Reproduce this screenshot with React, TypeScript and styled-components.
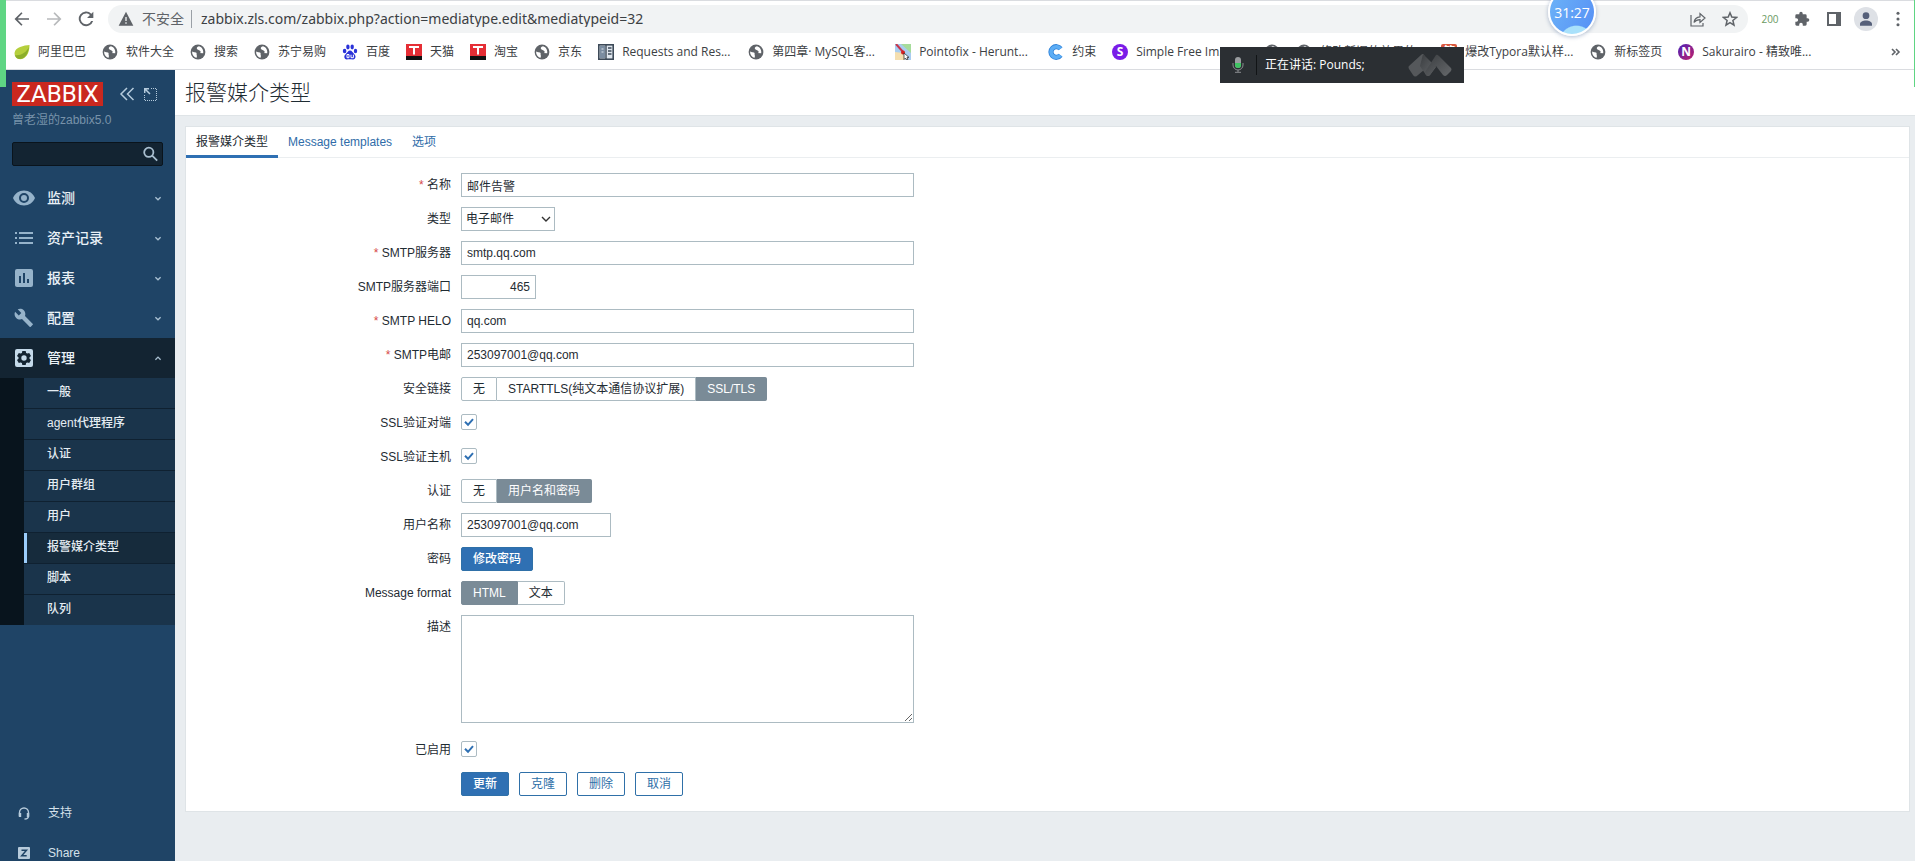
import React from "react";
import styled, { createGlobalStyle, css } from "styled-components";

const ui = `"Liberation Sans", "Noto Sans CJK SC", sans-serif`;
const chromeFont = `"Open Sans", "Noto Sans CJK SC", sans-serif`;

const GlobalStyle = createGlobalStyle`
  *, *::before, *::after { box-sizing: border-box; }
  html, body, #root { height: 100%; }
  body { margin: 0; overflow: hidden; font: 12px/16px ${ui}; color: #1f2c33; background: #e9edf0; }
  button, input, select, textarea { font: inherit; color: inherit; margin: 0; }
  a { color: inherit; text-decoration: none; }
  ul { list-style: none; margin: 0; padding: 0; }
`;

const Screen = styled.div`
  position: relative;
  height: 100vh;
  display: flex;
  flex-direction: column;
`;

/* ---------- browser frame ---------- */
const BrowserBar = styled.header`
  flex: none;
  background: #fff;
  border-top: 1px solid #dadce0;
  border-bottom: 1px solid #dadce0;
  font-family: ${chromeFont};
  color: #3c4043;
`;
const Toolbar = styled.div`
  display: flex;
  align-items: center;
  height: 36px;
  padding: 0 5px 0 10px;
  gap: 8px;
`;
const ToolButton = styled.button`
  display: flex;
  flex: none;
  align-items: center;
  justify-content: center;
  width: 24px;
  height: 24px;
  border: 0;
  padding: 0;
  background: none;
  color: #5f6368;
`;
const Address = styled.div`
  flex: 1;
  display: flex;
  align-items: center;
  height: 28px;
  margin: 0 2px;
  padding: 0 6px 0 10px;
  border-radius: 14px;
  background: #f1f3f4;
  color: #5f6368;
  font-size: 14px;
`;
const Insecure = styled.span`
  display: flex;
  align-items: center;
  gap: 8px;
  padding-right: 7px;
  border-right: 1px solid #9aa0a6;
  line-height: 18px;
`;
const Url = styled.input`
  flex: 1;
  min-width: 0;
  border: 0;
  padding: 0 0 0 9px;
  background: none;
  outline: 0;
  color: #3c4043;
  font-family: "Noto Sans", sans-serif;
  font-size: 14px;
`;
const AddressActions = styled.span`
  display: flex;
  gap: 8px;
`;
const Counter = styled.span`
  width: 24px;
  text-align: center;
  color: #6a9a62;
  font-size: 10px;
`;
const Avatar = styled.span`
  display: flex;
  width: 24px;
  height: 24px;
  border-radius: 50%;
  align-items: center;
  justify-content: center;
  background: #dee1e6;
`;
const Bookmarks = styled.nav`
  display: flex;
  align-items: center;
  height: 32px;
  padding: 0 14px 2px;
  gap: 16px;
  white-space: nowrap;
`;
const Bookmark = styled.a`
  display: flex;
  align-items: center;
  flex: none;
  gap: 8px;
`;
const BookmarkText = styled.span<{ $w?: number }>`
  ${(p) => p.$w && css`width: ${p.$w}px;`}
`;
const More = styled.button`
  display: flex;
  margin-left: auto;
  border: 0;
  padding: 0;
  background: none;
  color: #5f6368;
`;
const Tile = styled.span<{ $bg: string; $round?: boolean }>`
  display: flex;
  align-items: center;
  justify-content: center;
  width: 16px;
  height: 16px;
  border-radius: ${(p) => (p.$round ? "50%" : "2px")};
  background: ${(p) => p.$bg};
  color: #fff;
  font-weight: 700;
  font-size: 12px;
`;

/* ---------- floating windows ---------- */
const ShareEdge = styled.div<{ $side: "left" | "right" }>`
  position: absolute;
  top: 0;
  ${(p) => p.$side}: 0;
  width: ${(p) => (p.$side === "left" ? 6 : 1)}px;
  height: 87px;
  background: #5fd583;
`;
const Speaking = styled.div`
  position: absolute;
  top: 47px;
  right: 451px;
  width: 244px;
  height: 36px;
  display: flex;
  align-items: center;
  padding: 0 12px;
  background: #2b2f33;
  color: #fff;
  font-family: ${chromeFont};
`;
const SpeakingText = styled.span`
  flex: 1;
  margin-left: 12px;
  padding-left: 8px;
  border-left: 1px solid #111416;
  line-height: 20px;
`;
const Timer = styled.div`
  position: absolute;
  top: -12px;
  right: 319px;
  width: 48px;
  height: 48px;
  display: flex;
  align-items: center;
  justify-content: center;
  border: 2px solid #fff;
  border-radius: 50%;
  background: radial-gradient(circle at 60% 120%, #a9e1fb 0 28%, transparent 30%), linear-gradient(115deg, #6cb4f8, #568ff5);
  box-shadow: 0 1px 4px rgba(60, 90, 140, 0.4);
  color: #fff;
  font: 14px ${chromeFont};
`;

/* ---------- sidebar ---------- */
const Body = styled.div`
  flex: 1;
  min-height: 0;
  display: flex;
`;
const Sidebar = styled.aside`
  flex: none;
  width: 175px;
  display: flex;
  flex-direction: column;
  overflow: hidden;
  background: #1f4466;
`;
const Brand = styled.div`
  display: flex;
  align-items: center;
  padding: 12px 0 0 12px;
  height: 36px;
`;
const Logo = styled.a`
  display: flex;
  flex: none;
  align-items: center;
  justify-content: center;
  width: 91px;
  height: 24px;
  margin-right: 16px;
  background: #c9281f;
  color: #fff;
  font: 24px/24px Roboto, sans-serif;
`;
const SideTool = styled.button`
  display: flex;
  border: 0;
  padding: 0;
  margin-right: 9px;
  background: none;
  color: #b5cbdc;
`;
const ServerName = styled.div`
  padding: 6px 12px 0;
  height: 36px;
  color: #7893aa;
`;
const Search = styled.label`
  display: flex;
  align-items: center;
  height: 24px;
  margin: 0 12px 12px;
  padding: 0 4px;
  border: 1px solid #0a141c;
  border-radius: 2px;
  background: #132432;
  color: #a9bfd0;
`;
const SearchInput = styled.input`
  flex: 1;
  min-width: 0;
  border: 0;
  background: none;
  outline: 0;
`;
const MenuRow = styled.a<{ $open?: boolean }>`
  display: grid;
  grid-template-columns: 24px 1fr 10px;
  column-gap: 11px;
  align-items: center;
  height: 40px;
  padding: 0 12px;
  background: ${(p) => (p.$open ? "#132432" : "transparent")};
  color: ${(p) => (p.$open ? "#c5daea" : "#96b3ca")};
`;
const MenuText = styled.span`
  color: #e9f1f7;
  font-size: 14px;
  font-weight: 500;
`;
const Submenu = styled.ul`
  padding-left: 24px;
  background: #08141d;
`;
const SubItem = styled.li`
  & + & { border-top: 1px solid #0f2131; }
`;
const SubLink = styled.a<{ $on?: boolean }>`
  display: block;
  height: 30px;
  padding-left: 20px;
  border-left: 3px solid ${(p) => (p.$on ? "#9bcdfb" : "#1a344b")};
  background: ${(p) => (p.$on ? "#162b3c" : "#1a344b")};
  color: #e4ecf2;
  line-height: 29px;
  font-weight: 500;
`;
const SideFooter = styled.nav`
  flex: none;
  height: 68px;
  margin-top: auto;
  overflow: hidden;
`;
const FooterLink = styled.a`
  display: grid;
  grid-template-columns: 24px 1fr;
  column-gap: 12px;
  align-items: center;
  height: 40px;
  padding: 0 12px;
  color: #d5e1ea;
`;
const IconCell = styled.span`
  display: flex;
  justify-content: center;
`;

/* ---------- main ---------- */
const Main = styled.main`
  flex: 1;
  min-width: 0;
`;
const PageHead = styled.div`
  height: 46px;
  padding: 0 10px;
  border-bottom: 1px solid #dfe4e7;
  background: #fff;
`;
const Title = styled.h1`
  margin: 0;
  font-size: 21px;
  font-weight: 300;
  line-height: 46px;
`;
const Card = styled.section`
  margin: 10px 5px 0 10px;
  border: 1px solid #dfe4e7;
  background: #fff;
`;
const Tabs = styled.nav`
  display: flex;
  height: 31px;
  border-bottom: 1px solid #ebeef0;
`;
const Tab = styled.a<{ $on?: boolean }>`
  height: 31px;
  padding: 0 10px;
  line-height: 30px;
  color: ${(p) => (p.$on ? "#1f2c33" : "#2f6ca8")};
  ${(p) => p.$on && css`border-bottom: 3px solid #2f70b3;`}
`;
const Form = styled.form`
  display: grid;
  gap: 10px;
  padding: 15px 0;
`;
const Row = styled.div<{ $tall?: boolean }>`
  display: grid;
  grid-template-columns: 265px 1fr;
  column-gap: 10px;
  align-items: ${(p) => (p.$tall ? "start" : "center")};
  min-height: 24px;
  padding-bottom: ${(p) => (p.$tall ? 5 : 0)}px;
`;
const Label = styled.label<{ $req?: boolean }>`
  text-align: right;
  line-height: 24px;
  ${(p) => p.$req && css`&::before { content: "* "; color: #d64a4a; }`}
`;
const TextBox = styled.input<{ $w?: number; $right?: boolean }>`
  width: ${(p) => p.$w ?? 453}px;
  height: 24px;
  padding: 0 5px;
  border: 1px solid #acbbc2;
  background: #fff;
  outline: 0;
  text-align: ${(p) => (p.$right ? "right" : "left")};
`;
const SelectWrap = styled.span`
  position: relative;
  width: 94px;
  display: flex;
  & > svg { position: absolute; right: 4px; top: 8px; pointer-events: none; }
`;
const Select = styled.select`
  appearance: none;
  width: 100%;
  height: 24px;
  padding: 0 4px;
  border: 1px solid #acbbc2;
  border-radius: 0;
  background: #fff;
`;
const Area = styled.textarea`
  display: block;
  width: 453px;
  height: 108px;
  border: 1px solid #acbbc2;
  resize: both;
  background: #fff;
`;
const Check = styled.input`
  appearance: none;
  display: block;
  width: 16px;
  height: 16px;
  margin-bottom: 2px;
  border: 1px solid #acbbc2;
  border-radius: 2px;
  background: #fff url("data:image/svg+xml,%3Csvg xmlns='http://www.w3.org/2000/svg' viewBox='0 0 14 14'%3E%3Cpath d='M3 6.8l3 3 5-5.6' fill='none' stroke='%232f70b3' stroke-width='2'/%3E%3C/svg%3E") center / 14px 14px;
`;
const Segments = styled.div`
  display: flex;
`;
const Segment = styled.label`
  height: 24px;
  padding: 0 11px;
  border: 1px solid #acbbc2;
  line-height: 22px;
  & + & { border-left: 0; }
  &:first-child { border-radius: 2px 0 0 2px; }
  &:last-child { border-radius: 0 2px 2px 0; }
  &:has(input:checked) { background: #7a8b97; border-color: #7a8b97; color: #fff; }
`;
const HiddenRadio = styled.input`
  position: absolute;
  opacity: 0;
  pointer-events: none;
`;
const Actions = styled.div`
  display: flex;
  gap: 10px;
  grid-column: 2;
`;
const Button = styled.button<{ $primary?: boolean }>`
  justify-self: start;
  height: 24px;
  padding: 0 11px;
  border: 1px solid #2f70a8;
  border-radius: 2px;
  line-height: 22px;
  background: ${(p) => (p.$primary ? "#2f70b3" : "#fff")};
  color: ${(p) => (p.$primary ? "#fff" : "#2f70a8")};
  font-weight: ${(p) => (p.$primary ? 500 : 400)};
`;

/* ---------- drawings ---------- */
const Globe = () => (
  <svg width="16" height="16" viewBox="0 0 16 16">
    <circle cx="8" cy="8" r="7.4" fill="#5f6368" />
    <path d="M9 2.2C7 2.6 6.200 4 7.200 5.200c1 1.100 2.800.8 3.400 2.200.3.9-.2 1.400-1.200 1.600l3.800.2c.5-3-1-6.200-4.200-7zM2.200 7.500c1 .2 1.400.8 2.600.8 1.600 0 2 .7 1.800 1.700-.2.800.4 1.200.3 2.200l-.3 1.600C3.800 13 1.800 10.500 2.200 7.500z" fill="#fff" />
  </svg>
);
const Leaf = () => (
  <svg width="16" height="16" viewBox="0 0 16 16">
    <path d="M15.500 1C10 1.500 1 3 .5 9c0 3 1.500 5.500 4 6 6 1 11-4 11-14z" fill="#b5cf3c" />
    <path d="M1 11c5 1 11-2 14-8-1 8-5 12.500-10 12-2-.3-3.500-2-4-4z" fill="#8cae2b" />
  </svg>
);
const Paw = () => (
  <svg width="16" height="16" viewBox="0 0 16 16" fill="#2a32d8">
    <ellipse cx="2.600" cy="7" rx="1.800" ry="2.300" /><ellipse cx="5.900" cy="3" rx="1.700" ry="2.400" />
    <ellipse cx="10.200" cy="3" rx="1.700" ry="2.400" /><ellipse cx="13.500" cy="7" rx="1.700" ry="2.200" />
    <path d="M8 6.500c2 0 2.600 2 4.200 3.500 2.600 2.500 1 5.500-1.200 5.400-2 0-4-.4-6 0-2.400.2-4-3-1.200-5.400C5.600 8.500 6 6.500 8 6.500z" />
    <path d="M5 10.500h2v3.200H5zM9 10.700v3h2.400v-3" fill="none" stroke="#fff" />
  </svg>
);
const RedT = () => (
  <svg width="16" height="16" viewBox="0 0 16 16">
    <path fill="#e52e35" d="M0 0h16v12H0z" /><path fill="#111" d="M0 12h16v4H0z" />
    <path d="M3 3h10M8 2.500v8" stroke="#fff" strokeWidth="2" />
  </svg>
);
const Book = () => (
  <svg width="16" height="16" viewBox="0 0 16 16">
    <rect x=".8" y=".8" width="14.400" height="14.400" fill="#dfe6ee" stroke="#3d4a58" strokeWidth="1.600" />
    <path d="M2 2h5v12H2z" fill="#7b8da1" /><path d="M8 1v14M10 4h3.500M10 7h3.500M10 10h3.500" stroke="#3d4a58" strokeWidth="1.400" />
    <path d="M3.500 5h2M3.500 8h2" stroke="#dfe6ee" />
  </svg>
);
const Pointo = () => (
  <svg width="16" height="16" viewBox="0 0 16 16">
    <path fill="#a9cdf0" d="M0 0h16v16H0z" /><path fill="#a6dc9b" d="M6 0h10v9z" /><path fill="#f5dfb0" d="M0 8l8 1 2 7H0z" />
    <path d="M1 0l8 9" stroke="#c7354a" strokeWidth="2" /><circle cx="8" cy="8.500" r="2" fill="#d42222" />
    <path d="M9 9v6.500l1.500-1.500 1.200 2 1.300-.6-1-2h2z" fill="#fff" stroke="#222" strokeWidth=".7" />
  </svg>
);
const BlueC = () => (
  <svg width="16" height="16" viewBox="0 0 16 16">
    <path d="M12.500 4.800A5.300 5.300 0 1 0 12.500 11.200" fill="none" stroke="#2a7fd8" strokeWidth="5.200" />
    <path d="M12.500 4.800A5.300 5.300 0 1 0 12.500 11.200" fill="none" stroke="#5cadf5" strokeWidth="3.600" />
  </svg>
);

const Svg = ({ s = 16, children, vb = "0 0 24 24" }: { s?: number; children: React.ReactNode; vb?: string }) => (
  <svg width={s} height={s} viewBox={vb} fill="currentColor">{children}</svg>
);
const Chevron = ({ up }: { up?: boolean }) => (
  <svg width="10" height="10" viewBox="0 0 10 10" fill="none" stroke="#a9c0d2" strokeWidth="1.300">
    <path d={up ? "M2.400 6.700l2.600-2.600 2.600 2.600" : "M2.400 4.200l2.600 2.600 2.600-2.600"} />
  </svg>
);

const menuIcons: Record<string, React.ReactNode> = {
  eye: <Svg s={24}><path d="M12 4.500C7 4.500 2.700 7.600 1 12c1.700 4.400 6 7.500 11 7.500s9.300-3.100 11-7.500c-1.700-4.400-6-7.500-11-7.500zM12 17a5 5 0 1 1 0-10 5 5 0 0 1 0 10zm0-8a3 3 0 1 0 0 6 3 3 0 0 0 0-6z" /></Svg>,
  list: <Svg s={24}><path d="M3 6h2v2H3zM3 11h2v2H3zM3 16h2v2H3zM7 6h14v2H7zM7 11h14v2H7zM7 16h14v2H7z" /></Svg>,
  chart: <Svg s={24}><path d="M19 3H5a2 2 0 0 0-2 2v14c0 1.100.9 2 2 2h14a2 2 0 0 0 2-2V5a2 2 0 0 0-2-2zM9 17H7v-7h2zm4 0h-2V7h2zm4 0h-2v-4h2z" /></Svg>,
  wrench: <Svg s={24}><path d="M20.600 17.700l-7.600-7.600c.8-1.900.3-4.200-1.200-5.800C10.100 2.700 7.700 2.400 5.700 3.300L9.300 6.900 6.800 9.400 3.100 5.800C2.100 7.700 2.500 10.200 4.200 11.900c1.600 1.600 3.900 2 5.800 1.200l7.600 7.600c.3.300.9.300 1.200 0l1.900-1.900c.4-.3.400-.8-.1-1.100z" /></Svg>,
  gear: <Svg s={24}><path fillRule="evenodd" d="M5 3h14a2 2 0 0 1 2 2v14a2 2 0 0 1-2 2H5a2 2 0 0 1-2-2V5a2 2 0 0 1 2-2zm5.300 2l-.4 1.900-1.300.7L6.800 7 5 10l1.500 1.300v1.400L5 14l1.800 3 1.800-.6 1.300.7.400 1.900h3.400l.4-1.900 1.300-.7 1.800.6 1.800-3-1.500-1.300v-1.400L19 10l-1.800-3-1.800.6-1.300-.7-.4-1.900zM12 9.300a2.700 2.700 0 1 1 0 5.400 2.700 2.700 0 0 1 0-5.400z" /></Svg>,
};

type Mark = { icon: React.ReactNode; text?: string; w?: number };
const marks: Mark[] = [
  { icon: <Leaf />, text: "阿里巴巴" },
  { icon: <Globe />, text: "软件大全" },
  { icon: <Globe />, text: "搜索" },
  { icon: <Globe />, text: "苏宁易购" },
  { icon: <Paw />, text: "百度" },
  { icon: <RedT />, text: "天猫" },
  { icon: <RedT />, text: "淘宝" },
  { icon: <Globe />, text: "京东" },
  { icon: <Book />, text: "Requests and Res...", w: 110 },
  { icon: <Globe />, text: "第四章· MySQL客...", w: 107 },
  { icon: <Pointo />, text: "Pointofix - Herunt...", w: 113 },
  { icon: <BlueC />, text: "约束" },
  { icon: <Tile $round $bg="#7a1ce8">S</Tile>, text: "Simple Free Im...", w: 112 },
  { icon: <Globe /> },
  { icon: <Globe />, text: "修改新旧的效果的...", w: 105 },
  { icon: <Tile $bg="#d9583f">简</Tile>, text: "爆改Typora默认样...", w: 109 },
  { icon: <Globe />, text: "新标签页" },
  { icon: <Tile $round $bg="linear-gradient(135deg,#4a22b8,#c0206a)">N</Tile>, text: "Sakurairo - 精致唯..." },
];

const menu = [
  ["eye", "监测"],
  ["list", "资产记录"],
  ["chart", "报表"],
  ["wrench", "配置"],
  ["gear", "管理"],
];
const submenu = ["一般", "agent代理程序", "认证", "用户群组", "用户", "报警媒介类型", "脚本", "队列"];

const Choice = ({ name, options, value }: { name: string; options: string[]; value: string }) => (
  <Segments role="radiogroup" aria-label={name}>
    {options.map((o) => (
      <Segment key={o}>
        <HiddenRadio type="radio" name={name} defaultChecked={o === value} />
        {o}
      </Segment>
    ))}
  </Segments>
);

type FieldProps = { id: string; label: string; value: string; req?: boolean; w?: number; right?: boolean };
const Field = ({ id, label, value, req, w, right }: FieldProps) => (
  <Row>
    <Label htmlFor={id} $req={req}>{label}</Label>
    <TextBox id={id} type="text" defaultValue={value} $w={w} $right={right} />
  </Row>
);

export default function App() {
  return (
    <Screen>
      <GlobalStyle />
      <BrowserBar>
        <Toolbar>
          <ToolButton aria-label="Back"><Svg><path d="M22.500 10.700H5.600l7.200-7.200L11 1.700.8 12 11 22.300l1.800-1.800-7.200-7.200h16.900z" /></Svg></ToolButton>
          <ToolButton aria-label="Forward" disabled><Svg><path opacity=".45" d="M1.500 10.700h16.900l-7.200-7.200L13 1.700 23.200 12 13 22.300l-1.800-1.800 7.200-7.200H1.500z" /></Svg></ToolButton>
          <ToolButton aria-label="Reload"><Svg><path d="M20 4a11 11 0 1 0 2.700 11h-3A8.200 8.200 0 1 1 18 6l-4.500 4.500H23V1z" /></Svg></ToolButton>
          <Address>
            <Insecure>
              <Svg><path d="M12 1L1 22h22zM11 9h2v6h-2zm0 8h2v2h-2z" fillRule="evenodd" /></Svg>
              不安全
            </Insecure>
            <Url aria-label="Address" defaultValue="zabbix.zls.com/zabbix.php?action=mediatype.edit&mediatypeid=32" />
            <AddressActions>
              <ToolButton aria-label="Share">
                <svg width="16" height="16" viewBox="0 0 16 16" fill="none" stroke="currentColor" strokeWidth="1.200"><path d="M1 4v11h12v-3M4 11.500C4.500 8 6.500 6 10 5.800V2.500L15 7l-5 4.500V8.600c-2.500 0-4.500.9-6 2.900z" /></svg>
              </ToolButton>
              <ToolButton aria-label="Bookmark">
                <svg width="16" height="16" viewBox="0 0 16 16" fill="none" stroke="currentColor" strokeWidth="1.500"><path d="M8 1.800l1.800 4.300 4.700.4-3.600 3 1.100 4.600L8 11.700l-4 2.400 1.100-4.600-3.600-3 4.700-.4z" /></svg>
              </ToolButton>
            </AddressActions>
          </Address>
          <Counter>200</Counter>
          <ToolButton aria-label="Extensions"><Svg><path d="M20.500 11H19V7a2 2 0 0 0-2-2h-4V3.500a2.500 2.500 0 0 0-5 0V5H4a2 2 0 0 0-2 2v3.800h1.500a2.700 2.700 0 0 1 0 5.400H2V20c0 1.100.9 2 2 2h3.800v-1.500a2.700 2.700 0 0 1 5.400 0V22H17a2 2 0 0 0 2-2v-4h1.500a2.500 2.500 0 0 0 0-5z" /></Svg></ToolButton>
          <ToolButton aria-label="Side panel"><Svg s={14} vb="0 0 14 14"><path fillRule="evenodd" d="M0 0h14v14H0zM2 2v10h7V2z" /></Svg></ToolButton>
          <Avatar><Svg s={18}><path fill="#56607a" d="M12 12a4.500 4.500 0 1 0 0-9 4.500 4.500 0 0 0 0 9zm0 2c-4 0-8 2-8 4.500V21h16v-2.500c0-2.500-4-4.500-8-4.500z" /></Svg></Avatar>
          <ToolButton aria-label="Menu"><Svg><circle cx="12" cy="3.500" r="2.300" /><circle cx="12" cy="12" r="2.300" /><circle cx="12" cy="20.500" r="2.300" /></Svg></ToolButton>
        </Toolbar>
        <Bookmarks>
          {marks.map((m, i) => (
            <Bookmark key={i} href="#">
              {m.icon}
              {m.text && <BookmarkText $w={m.w}>{m.text}</BookmarkText>}
            </Bookmark>
          ))}
          <More aria-label="More bookmarks">
            <svg width="10" height="8" viewBox="0 0 10 8" fill="none" stroke="currentColor" strokeWidth="1.600"><path d="M1 1l3 3-3 3M5 1l3 3-3 3" /></svg>
          </More>
        </Bookmarks>
      </BrowserBar>

      <Body>
        <Sidebar>
          <Brand>
            <Logo href="#">ZABBIX</Logo>
            <SideTool aria-label="Collapse">
              <svg width="16" height="14" viewBox="0 0 16 14" fill="none" stroke="currentColor" strokeWidth="1.500"><path d="M8 1L2 7l6 6M14.500 1l-6 6 6 6" /></svg>
            </SideTool>
            <SideTool aria-label="Hide">
              <svg width="13" height="13" viewBox="0 0 13 13" fill="none" stroke="currentColor"><path d="M7 .5h5.500v12H.5V7" strokeDasharray="1 1" /><path d="M.7 5V.7H5M1 1l5 5" strokeWidth="1.500" /></svg>
            </SideTool>
          </Brand>
          <ServerName>曾老湿的zabbix5.0</ServerName>
          <Search>
            <SearchInput type="search" aria-label="Search" />
            <svg width="16" height="16" viewBox="0 0 16 16" fill="none" stroke="currentColor" strokeWidth="1.800"><circle cx="6.800" cy="6.300" r="4.600" /><path d="M10.200 9.700l5 5" /></svg>
          </Search>
          <nav>
            {menu.map(([icon, text]) => (
              <MenuRow key={text} href="#" $open={icon === "gear"}>
                <IconCell>{menuIcons[icon]}</IconCell>
                <MenuText>{text}</MenuText>
                <Chevron up={icon === "gear"} />
              </MenuRow>
            ))}
            <Submenu>
              {submenu.map((s) => (
                <SubItem key={s}><SubLink href="#" $on={s === "报警媒介类型"}>{s}</SubLink></SubItem>
              ))}
            </Submenu>
          </nav>
          <SideFooter>
            <FooterLink href="#">
              <IconCell><svg width="12" height="13" viewBox="0 0 12 13" fill="none" stroke="#b7cbdb" strokeWidth="1.400"><path d="M1.500 9V5.500a4.500 4.500 0 0 1 9 0V9M10.500 9c0 2-1.500 3-4 3" /><path d="M2 6v4M10 6v4" strokeWidth="2.400" /></svg></IconCell>
              支持
            </FooterLink>
            <FooterLink href="#">
              <IconCell><svg width="12" height="12" viewBox="0 0 12 12"><rect width="12" height="12" rx="1" fill="#b7cbdb" /><path d="M3.500 3.200h5L3.700 8.800h5" fill="none" stroke="#1f4466" strokeWidth="1.500" /></svg></IconCell>
              Share
            </FooterLink>
          </SideFooter>
        </Sidebar>

        <Main>
          <PageHead><Title>报警媒介类型</Title></PageHead>
          <Card>
            <Tabs>
              <Tab href="#" $on>报警媒介类型</Tab>
              <Tab href="#">Message templates</Tab>
              <Tab href="#">选项</Tab>
            </Tabs>
            <Form>
              <Field id="name" label="名称" value="邮件告警" req />
              <Row>
                <Label htmlFor="type">类型</Label>
                <SelectWrap>
                  <Select id="type"><option>电子邮件</option></Select>
                  <svg width="10" height="8" viewBox="0 0 10 8" fill="none" stroke="#333" strokeWidth="1.400"><path d="M1 2l4 4 4-4" /></svg>
                </SelectWrap>
              </Row>
              <Field id="server" label="SMTP服务器" value="smtp.qq.com" req />
              <Field id="port" label="SMTP服务器端口" value="465" w={75} right />
              <Field id="helo" label="SMTP HELO" value="qq.com" req />
              <Field id="email" label="SMTP电邮" value="253097001@qq.com" req />
              <Row><Label as="span">安全链接</Label><Choice name="安全链接" options={["无", "STARTTLS(纯文本通信协议扩展)", "SSL/TLS"]} value="SSL/TLS" /></Row>
              <Row><Label htmlFor="peer">SSL验证对端</Label><Check id="peer" type="checkbox" defaultChecked /></Row>
              <Row><Label htmlFor="host">SSL验证主机</Label><Check id="host" type="checkbox" defaultChecked /></Row>
              <Row><Label as="span">认证</Label><Choice name="认证" options={["无", "用户名和密码"]} value="用户名和密码" /></Row>
              <Field id="user" label="用户名称" value="253097001@qq.com" w={150} />
              <Row><Label htmlFor="pass">密码</Label><Button id="pass" type="button" $primary>修改密码</Button></Row>
              <Row><Label as="span">Message format</Label><Choice name="Message format" options={["HTML", "文本"]} value="HTML" /></Row>
              <Row $tall><Label htmlFor="desc">描述</Label><Area id="desc" /></Row>
              <Row><Label htmlFor="on">已启用</Label><Check id="on" type="checkbox" defaultChecked /></Row>
              <Row>
                <Actions>
                  <Button type="button" $primary>更新</Button>
                  <Button type="button">克隆</Button>
                  <Button type="button">删除</Button>
                  <Button type="button">取消</Button>
                </Actions>
              </Row>
            </Form>
          </Card>
        </Main>
      </Body>

      <ShareEdge $side="left" />
      <ShareEdge $side="right" />
      <Speaking>
        <svg width="12" height="16" viewBox="0 0 12 16"><rect x="3" y="0" width="6" height="11" rx="3" fill="#9a9da0" /><path d="M3 6h6v2a3 3 0 0 1-6 0z" fill="#3fc463" /><path d="M1 6v2a5 5 0 0 0 10 0V6M6 13v2M3 15.300h6" fill="none" stroke="#8a8d90" /></svg>
        <SpeakingText>正在讲话: Pounds;</SpeakingText>
        <svg width="44" height="24" viewBox="0 0 44 24">
          <defs>
            <linearGradient id="fold" x1="0" y1="0" x2="1" y2="1"><stop offset="0" stopColor="#3a3d40" /><stop offset="1" stopColor="#65686b" /></linearGradient>
          </defs>
          <path d="M13 2q2-2 3 0l6 10-12 10q-3 3-5 0l-4-6q-1-2 0-3z" fill="#55585b" />
          <path d="M15 1l13 13-6 8q-2 2-4 0l-6-9z" fill="url(#fold)" />
          <path d="M28 2q1-1 3 1l12 12q1 1 0 3l-4 4q-2 2-4 0l-7-9-6 9q-2 2-4 0l-1-3z" fill="url(#fold)" />
        </svg>
      </Speaking>
      <Timer>31:27</Timer>
    </Screen>
  );
}
